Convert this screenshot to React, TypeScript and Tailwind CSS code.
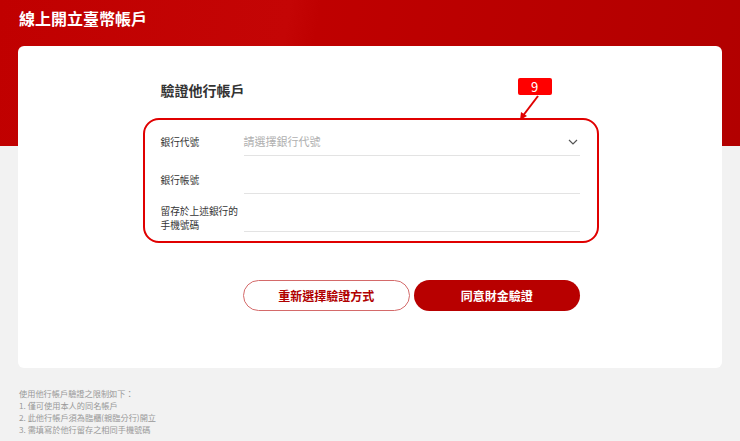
import React from "react";

const FONT = "font-['Noto_Sans_CJK_TC','Noto_Sans',sans-serif]";

interface FieldRowProps {
  readonly label: React.ReactNode;
  readonly tall?: boolean;
  readonly children?: React.ReactNode;
}

function FieldRow({ label, tall, children }: FieldRowProps): React.JSX.Element {
  return (
    <div className="flex items-end">
      <div
        className={`w-[83px] shrink-0 whitespace-nowrap text-[9.7px] leading-[14px] text-[#333] ${tall ? "pb-0" : "pb-[7px]"}`}
      >
        {label}
      </div>
      <div className="flex h-[28px] flex-1 items-center border-b border-[#e3e3e3]">{children}</div>
    </div>
  );
}

export default function App(): React.JSX.Element {
  return (
    <div className={`${FONT} h-[441px] w-full overflow-hidden bg-[#f2f2f2]`}>
      <div className="h-[146px] bg-[linear-gradient(100deg,#c00000_0%,#c40505_38%,#bf0000_42%,#b20000_100%)] px-[19px] pt-[7px]">
        <h1 className="text-[16px] font-bold leading-[22px] text-white">線上開立臺幣帳戶</h1>
      </div>

      <div className="mx-[18px] mt-[-100px] rounded-[6px] bg-white pb-[57px] pt-[33px]">
        <div className="mx-auto w-[419px]">
          <h2 className="text-[14px] font-bold leading-[22px] text-[#333]">驗證他行帳戶</h2>

          <div className="relative mt-[27px]">
            <div className="flex flex-col gap-[10px]">
              <FieldRow label="銀行代號">
                <span className="flex-1 text-[11px] text-[#b0b0b0]">請選擇銀行代號</span>
                <svg width="10" height="6" viewBox="0 0 10 6" className="mr-[2px]">
                  <path d="M1 1l4 4 4-4" fill="none" stroke="#555" strokeWidth="1.2" />
                </svg>
              </FieldRow>
              <FieldRow label="銀行帳號" />
              <FieldRow
                tall
                label={
                  <>
                    留存於上述銀行的
                    <br />
                    手機號碼
                  </>
                }
              />
            </div>

            <div className="pointer-events-none absolute left-[-18px] right-[-19px] top-[-10px] bottom-[-11px] rounded-[16px] border-2 border-[#e00000]">
              <div className="absolute left-[373px] top-[-42px] flex h-[17px] w-[34px] items-center justify-center rounded-[2px] bg-[#ff0000] text-[13px] leading-none text-white">
                9
              </div>
              <svg width="24" height="26" viewBox="0 0 24 26" className="absolute left-[374px] top-[-25px]">
                <path d="M19 1L3 22" stroke="#e00000" strokeWidth="2" />
                <path d="M1 25l1-8 6 4z" fill="#e00000" />
              </svg>
            </div>
          </div>

          <div className="mt-[48px] flex gap-[4px] pl-[82px]">
            <button className="h-[31px] flex-1 rounded-full border border-[#d46a6a] bg-white text-[12px] font-bold text-[#b00000]">
              重新選擇驗證方式
            </button>
            <button className="h-[31px] flex-1 rounded-full bg-[#b80000] text-[12px] font-bold text-white">
              同意財金驗證
            </button>
          </div>
        </div>
      </div>

      <div className="px-[19px] pt-[19px] text-[8.2px] leading-[12px] text-[#999]">
        <p>使用他行帳戶驗證之限制如下：</p>
        <p>1. 僅可使用本人的同名帳戶</p>
        <p>2. 此他行帳戶須為臨櫃(親臨分行)開立</p>
        <p>3. 需填寫於他行留存之相同手機號碼</p>
      </div>
    </div>
  );
}
